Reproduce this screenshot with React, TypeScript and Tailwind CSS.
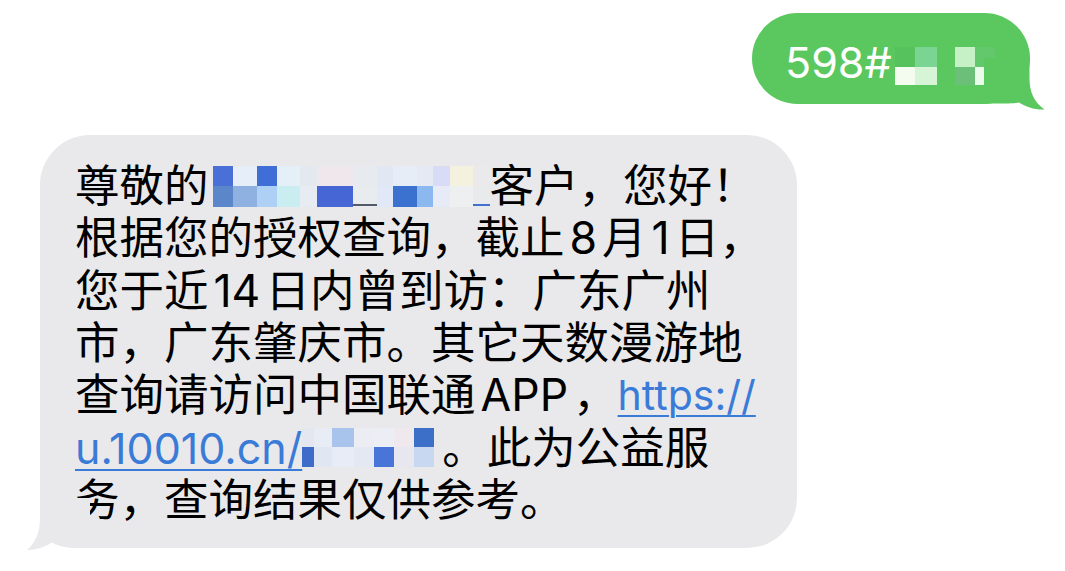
import React from "react";

type Cell = { w: number; t: string; b: string; u?: string };

const nameMosaic: Cell[] = [
  { w: 20, t: "#4a6fd6", b: "#5b86c9" },
  { w: 24, t: "#e6eef9", b: "#8fb1e1" },
  { w: 20, t: "#3f6fd6", b: "#aed0f4" },
  { w: 23, t: "#e4eff7", b: "#c9edf0" },
  { w: 17, t: "#e3e9ee", b: "#e6ecf1" },
  { w: 36, t: "#efe7eb", b: "#4566d4" },
  { w: 24, t: "#e7ebef", b: "#e9ecee", u: "#555b66" },
  { w: 16, t: "#e1e8f4", b: "#e1e8f7" },
  { w: 24, t: "#e7edf7", b: "#3b72cf" },
  { w: 16, t: "#e4e9f4", b: "#8bb8ef" },
  { w: 17, t: "#d8dcf7", b: "#e7ebf7" },
  { w: 23, t: "#f4f1df", b: "#edeff0" },
  { w: 17, t: "#eaeaec", b: "#e9eaec", u: "#4070d0" },
];

const linkMosaic: Cell[] = [
  { w: 12, t: "#e4e7ef", b: "#3f6cc8" },
  { w: 18, t: "#e8ecf4", b: "#e1e6f3" },
  { w: 22, t: "#a9c4ec", b: "#e8ecf6" },
  { w: 20, t: "#ecedf3", b: "#e4e8f2" },
  { w: 20, t: "#eceef5", b: "#4a75d8" },
  { w: 20, t: "#efe8ec", b: "#e8e6ee" },
  { w: 20, t: "#3c70c8", b: "#c8d8f0" },
];

const codeMosaic: Cell[] = [
  { w: 20, t: "#55c25d", b: "#f4fcef" },
  { w: 22, t: "#7bd592", b: "#d6f5d6" },
  { w: 18, t: "transparent", b: "transparent" },
  { w: 20, t: "#c6f0c6", b: "#6cbf79" },
  { w: 20, t: "#63c86b", b: "#e9fce9" },
];

function Mosaic({ cells, top, bottom, className }: { cells: Cell[]; top: number; bottom: number; className?: string }) {
  return (
    <span className={"flex shrink-0 " + (className ?? "")}>
      {cells.map((c, i) => (
        <span key={i} className="flex flex-col" style={{ width: c.w }}>
          <span style={{ height: top, background: c.t }} />
          <span className="relative" style={{ height: bottom, background: c.b }}>
            {c.u && <span className="absolute left-0 right-0 bottom-[1px] h-[2px]" style={{ background: c.u }} />}
          </span>
        </span>
      ))}
    </span>
  );
}

const Lat = ({ children }: { children: React.ReactNode }) => <span className="mx-[5px]">{children}</span>;

function Line({ children }: { children: React.ReactNode }) {
  return <div className="flex items-center h-[52.3px] whitespace-nowrap">{children}</div>;
}

export default function App() {
  return (
    <div className="w-[1065px] h-[571px] bg-white overflow-hidden text-black font-['Inter','Noto_Sans_CJK_SC',sans-serif]">
      {/* sent */}
      <div className="flex justify-end pt-[13px] pr-[35px]">
        <div className="relative w-[278px] h-[91px] rounded-full bg-[#5bc85f] pl-[33px] pt-[8px] flex items-center text-white text-[43px]">
          <span>598#</span>
          <Mosaic cells={codeMosaic} top={20} bottom={18} className="ml-[3px] mt-[7px]" />
          <svg className="absolute right-[-15px] bottom-[-6px]" width="61" height="52" viewBox="0 0 61 52">
            <path d="M0 0 L45.5 0 L45.5 20 C45.5 34 50 44 60.5 51.5 C51 52 42 49 35 44.5 C30 45.5 22 45.5 12 45.5 L0 45.5 Z" fill="#5bc85f" />
          </svg>
        </div>
      </div>

      {/* received */}
      <div className="pt-[31px] pl-[40px]">
        <div className="relative w-[757px] rounded-[50px] bg-[#e9e9eb] pt-[25px] pb-[22px] pl-[35px] text-[44.5px] leading-[52px]">
          <Line>
            <span>尊敬的</span>
            <Mosaic cells={nameMosaic} top={20} bottom={21} className="ml-[4px]" />
            <span>客户，您好！</span>
          </Line>
          <Line>
            <span>根据您的授权查询，截止</span>
            <Lat>8</Lat>
            <span>月</span>
            <Lat>1</Lat>
            <span>日，</span>
          </Line>
          <Line>
            <span>您于近</span>
            <Lat>14</Lat>
            <span>日内曾到访：广东广州</span>
          </Line>
          <Line>
            <span>市，广东肇庆市。其它天数漫游地</span>
          </Line>
          <Line>
            <span>查询请访问中国联通</span>
            <Lat>APP</Lat>
            <span>，</span>
            <span className="text-[41px] text-[#3b7bd8] underline decoration-2 underline-offset-[5px]">https://</span>
          </Line>
          <Line>
            <span className="text-[43px] text-[#3b7bd8] underline decoration-2 underline-offset-[5px]">u.10010.cn/</span>
            <Mosaic cells={linkMosaic} top={19} bottom={20} className="mr-[8px]" />
            <span>。此为公益服</span>
          </Line>
          <Line>
            <span>务，查询结果仅供参考。</span>
          </Line>
          <svg className="absolute left-[-15px] bottom-[-2px]" width="65" height="52" viewBox="0 0 65 52">
            <path d="M65 0 L15 0 L15 20 C15 34 11 44 2 52 C11 52 20 49 27 44.5 C32 48 42 50 52 50 L65 50 Z" fill="#e9e9eb" />
          </svg>
        </div>
      </div>
    </div>
  );
}
